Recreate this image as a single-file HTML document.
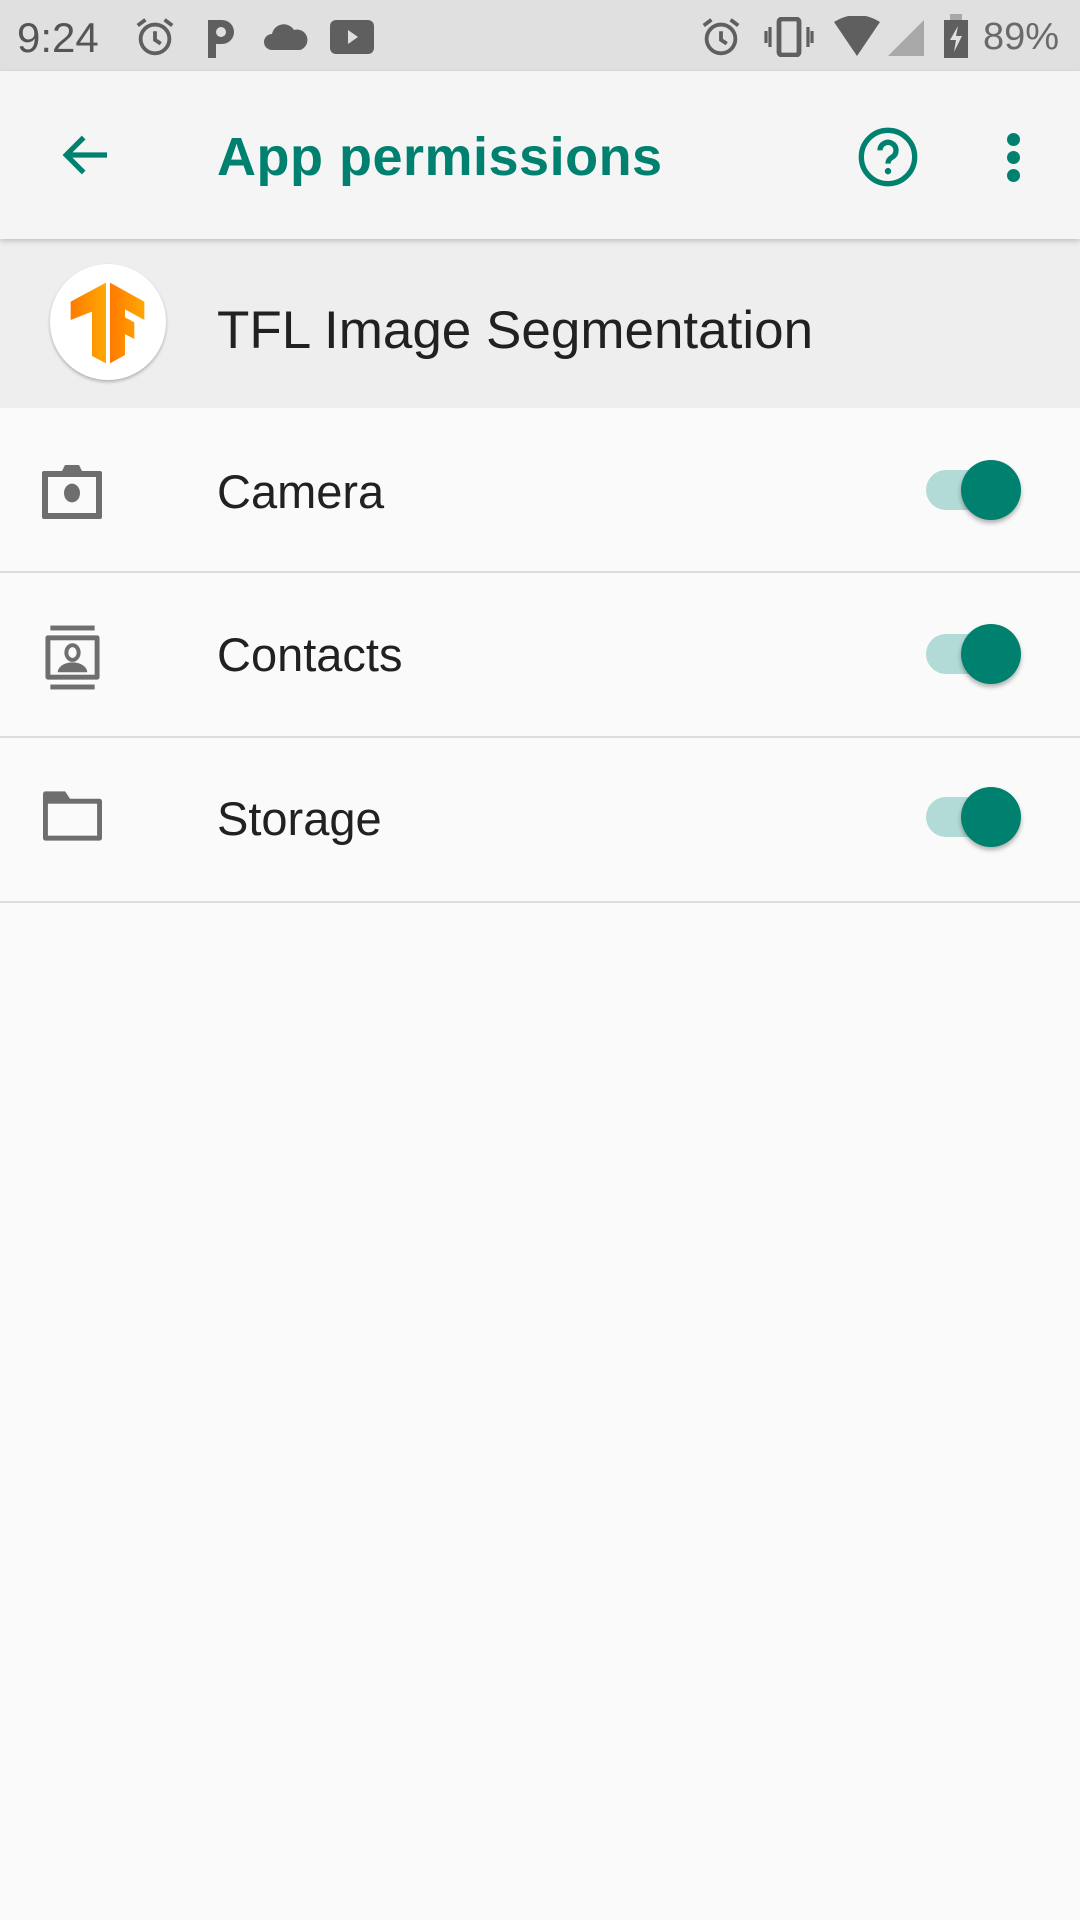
<!DOCTYPE html>
<html><head><meta charset="utf-8"><style>
html,body{margin:0;padding:0}
body{width:1080px;height:1920px;background:#fafafa;position:relative;overflow:hidden;font-family:"Liberation Sans",sans-serif}
.abs{position:absolute}
.status{left:0;top:0;width:1080px;height:71px;background:#e0e0e0}
.toolbar{left:0;top:71px;width:1080px;height:168px;background:#f5f5f5;box-shadow:0 2px 5px rgba(0,0,0,.2);z-index:2}
.hdr{left:0;top:239px;width:1080px;height:169px;background:#eeeeee}
.row{left:0;width:1080px;height:163px;border-bottom:2px solid #dcdcdc}
.lbl{left:217px;font-size:47px;color:#212121;line-height:1}
.track{left:926px;width:76px;height:40px;border-radius:20px;background:#b2dad6}
.thumb{left:961px;width:60px;height:60px;border-radius:50%;background:#00806f;box-shadow:0 3px 5px rgba(0,0,0,.3)}
</style></head><body>
<div class="abs status">
 <div class="abs" style="left:17px;top:14px;font-size:42px;color:#555">9:24</div>
 <svg class="abs" style="left:132px;top:14px" width="46" height="46" viewBox="0 0 24 24"><circle cx="12" cy="13" r="7.5" fill="none" stroke="#5f5f5f" stroke-width="2"/><path d="M12 9v4.5l3 2M3 6l4-3M21 6l-4-3" stroke="#5f5f5f" stroke-width="2" fill="none"/></svg>
 <svg class="abs" style="left:204px;top:16px" width="34" height="42" viewBox="0 0 17 21"><path d="M2 21V2h7a6 6 0 0 1 0 12H6v7z" fill="#5f5f5f"/><circle cx="8.5" cy="8" r="2.5" fill="#e0e0e0"/></svg>
 <svg class="abs" style="left:264px;top:18px" width="44" height="34" viewBox="0 0 22 17"><path d="M4 16a4 4 0 0 1 0-8 6 6 0 0 1 11-2 5 5 0 0 1 3 10z" fill="#5f5f5f"/></svg>
 <div class="abs" style="left:330px;top:20px;width:44px;height:34px;background:#5f5f5f;border-radius:6px"></div>
 <svg class="abs" style="left:346px;top:29px" width="14" height="16" viewBox="0 0 14 16"><path d="M2 1l10 7-10 7z" fill="#e0e0e0"/></svg>
 <svg class="abs" style="left:698px;top:14px" width="46" height="46" viewBox="0 0 24 24"><circle cx="12" cy="13" r="7.5" fill="none" stroke="#5f5f5f" stroke-width="2"/><path d="M12 9v4.5l3 2M3 6l4-3M21 6l-4-3" stroke="#5f5f5f" stroke-width="2" fill="none"/></svg>
 <svg class="abs" style="left:764px;top:17px" width="50" height="40" viewBox="0 0 25 20"><rect x="7.5" y="1" width="10" height="18" rx="1.5" fill="none" stroke="#5f5f5f" stroke-width="2.4"/><path d="M3 5v10M1 7v6M22 5v10M24 7v6" stroke="#5f5f5f" stroke-width="1.6"/></svg>
 <svg class="abs" style="left:834px;top:16px" width="46" height="40" viewBox="0 0 23 20"><path d="M0 3Q11.5-4 23 3L11.5 20z" fill="#5f5f5f"/></svg>
 <svg class="abs" style="left:888px;top:20px" width="36" height="36" viewBox="0 0 18 18"><path d="M18 0V18H0z" fill="#a8a8a8"/></svg>
 <svg class="abs" style="left:944px;top:14px" width="24" height="44" viewBox="0 0 12 22"><rect x="0" y="3" width="12" height="19" fill="#5f5f5f"/><rect x="3" y="0" width="6" height="3" fill="#a8a8a8"/><path d="M7 6L3 13h3l-1 6 4-8H6z" fill="#e0e0e0"/></svg>
 <div class="abs" style="left:983px;top:16px;font-size:38px;color:#6a6a6a">89%</div>
</div>
<div class="abs toolbar">
 <svg class="abs" style="left:58px;top:56px" width="56" height="56" viewBox="0 0 24 24"><path d="M21 12H4M11 4.5L3.5 12 11 19.5" fill="none" stroke="#00806f" stroke-width="2.2"/></svg>
 <div class="abs" style="left:217px;top:55px;font-size:54px;font-weight:bold;color:#00806f;letter-spacing:0.5px">App permissions</div>
 <svg class="abs" style="left:856px;top:54px" width="64" height="64" viewBox="0 0 24 24"><circle cx="12" cy="12" r="10" fill="none" stroke="#00806f" stroke-width="2"/><path d="M9 9.5a3 3 0 1 1 4.5 2.6c-1 .6-1.5 1.2-1.5 2.4" fill="none" stroke="#00806f" stroke-width="2"/><circle cx="12" cy="17.3" r="1.2" fill="#00806f"/></svg>
 <div class="abs" style="left:1007px;top:62px;width:13px;height:13px;border-radius:50%;background:#00806f"></div>
 <div class="abs" style="left:1007px;top:80px;width:13px;height:13px;border-radius:50%;background:#00806f"></div>
 <div class="abs" style="left:1007px;top:98px;width:13px;height:13px;border-radius:50%;background:#00806f"></div>
</div>
<div class="abs hdr">
 <div class="abs" style="left:50px;top:25px;width:116px;height:116px;border-radius:50%;background:#fff;box-shadow:0 2px 3px rgba(0,0,0,.25)"></div>
 <svg class="abs" style="left:0;top:1px" width="200" height="180" viewBox="0 0 600 540"><defs><linearGradient id="g" x1="0" x2="1"><stop offset="0" stop-color="#ff7a00"/><stop offset="1" stop-color="#ffa800"/></linearGradient></defs>
 <path d="M212 185L318 128V370L276 348V215L212 240Z" fill="url(#g)"/>
 <path d="M330 128L433 185V240L375 208V232L403 247V297L375 282V345L330 370Z" fill="url(#g)"/></svg>
 <div class="abs" style="left:217px;top:61px;font-size:53px;color:#212121">TFL Image Segmentation</div>
</div>
<div class="abs row" style="top:408px">
 <svg class="abs" style="left:42px;top:55px" width="60" height="56" viewBox="0 0 30 28"><path d="M0 5a1 1 0 0 1 1-1h9l1.5-3h7l1.5 3h9a1 1 0 0 1 1 1v22a1 1 0 0 1-1 1H1a1 1 0 0 1-1-1z" fill="#6e6e6e"/><rect x="3" y="7" width="24" height="18" fill="#fafafa"/><ellipse cx="15" cy="15" rx="4" ry="4.7" fill="#6e6e6e"/></svg>
 <div class="abs lbl" style="top:60px">Camera</div>
 <div class="abs track" style="top:62px"></div><div class="abs thumb" style="top:52px"></div>
</div>
<div class="abs row" style="top:573px">
 <svg class="abs" style="left:43px;top:52px" width="59" height="65" viewBox="0 0 24 26"><rect x="3" y="0" width="18" height="2" fill="#6e6e6e"/><rect x="3" y="24" width="18" height="2" fill="#6e6e6e"/><rect x="1" y="4" width="22" height="18" rx="1" fill="#6e6e6e"/><rect x="3" y="6" width="18" height="14" fill="#fafafa"/><ellipse cx="12" cy="11" rx="2.5" ry="3" fill="none" stroke="#6e6e6e" stroke-width="1.6"/><path d="M6 19a6 4 0 0 1 12 0z" fill="#6e6e6e"/></svg>
 <div class="abs lbl" style="top:58px">Contacts</div>
 <div class="abs track" style="top:61px"></div><div class="abs thumb" style="top:51px"></div>
</div>
<div class="abs row" style="top:738px">
 <svg class="abs" style="left:43px;top:53px" width="59" height="50" viewBox="0 0 24 20"><path d="M0 1a1 1 0 0 1 1-1h8l2 3h12a1 1 0 0 1 1 1v15a1 1 0 0 1-1 1H1a1 1 0 0 1-1-1z" fill="#6e6e6e"/><rect x="2" y="5" width="20" height="13" fill="#fafafa"/></svg>
 <div class="abs lbl" style="top:57px">Storage</div>
 <div class="abs track" style="top:59px"></div><div class="abs thumb" style="top:49px"></div>
</div>
</body></html>
